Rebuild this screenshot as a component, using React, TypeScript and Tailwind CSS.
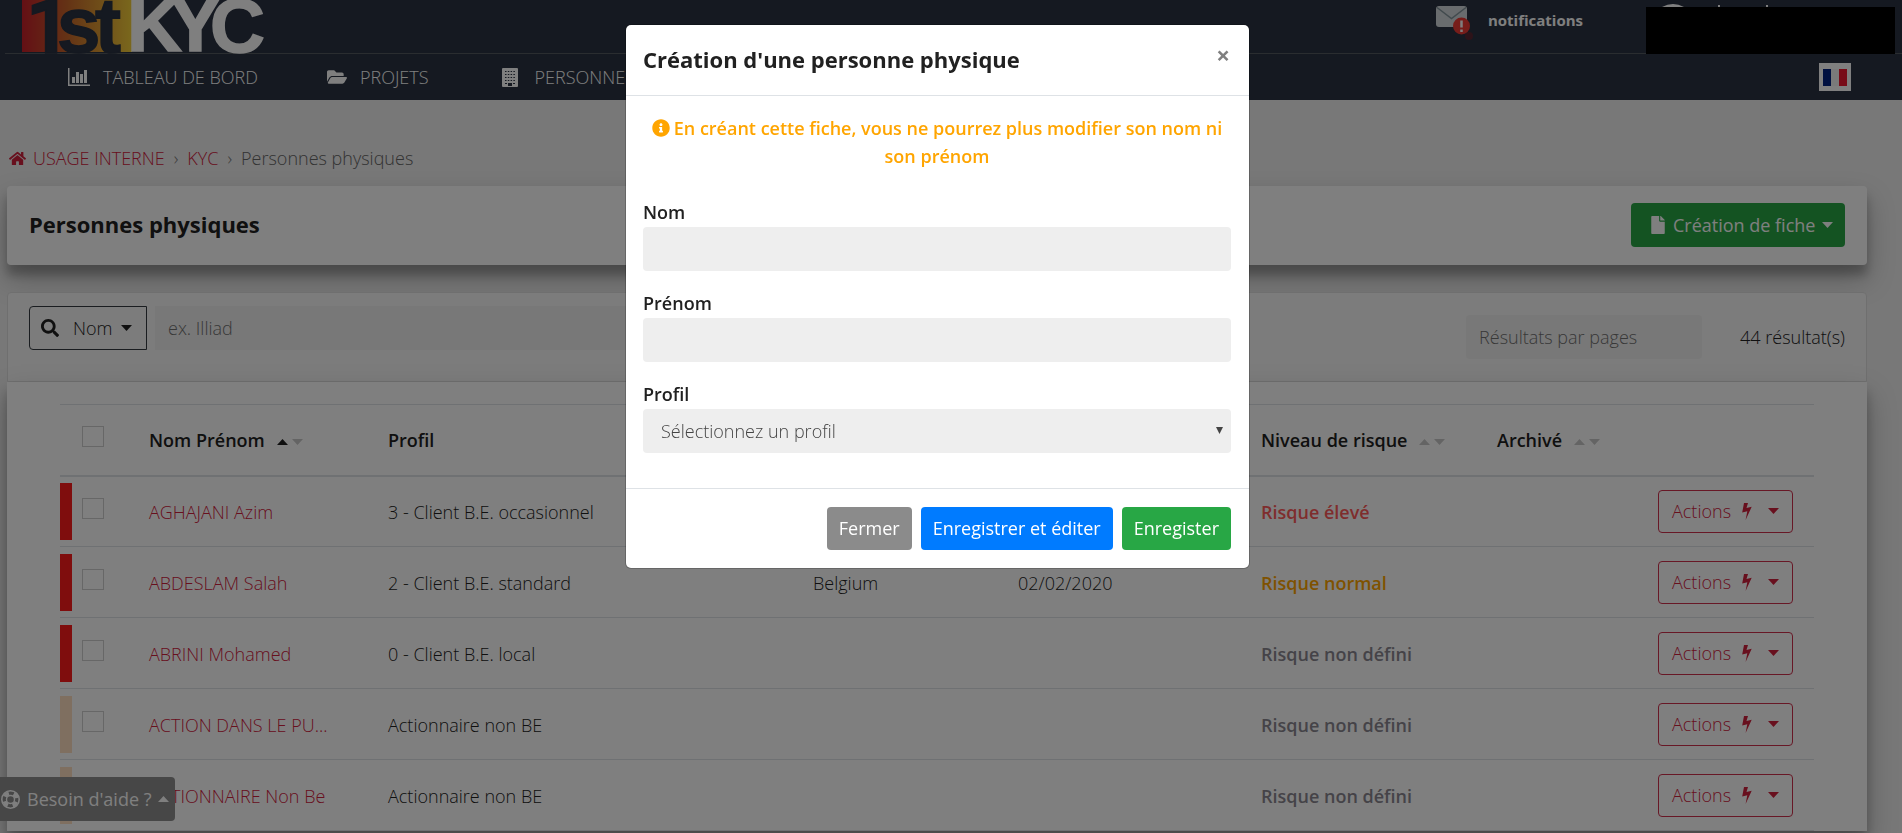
import React from 'react';
import { FaFile, FaFolderOpen, FaHome, FaInfoCircle, FaSearch } from 'react-icons/fa';

type Row = {
  name: string;
  profile: string;
  country?: string;
  date?: string;
  risk: string;
  riskClass: string;
  barClass: string;
};

const rows: Row[] = [
  { name: 'AGHAJANI Azim', profile: '3 - Client B.E. occasionnel', risk: 'Risque élevé', riskClass: 'text-[#ff5b5b]', barClass: 'bg-[#ff1a1a]' },
  { name: 'ABDESLAM Salah', profile: '2 - Client B.E. standard', country: 'Belgium', date: '02/02/2020', risk: 'Risque normal', riskClass: 'text-[#ffa500]', barClass: 'bg-[#ff1a1a]' },
  { name: 'ABRINI Mohamed', profile: '0 - Client B.E. local', risk: 'Risque non défini', riskClass: 'text-[#8a8790]', barClass: 'bg-[#ff1a1a]' },
  { name: 'ACTION DANS LE PU...', profile: 'Actionnaire non BE', risk: 'Risque non défini', riskClass: 'text-[#8a8790]', barClass: 'bg-[#ffdfc0]' },
  { name: 'ACTIONNAIRE Non Be', profile: 'Actionnaire non BE', risk: 'Risque non défini', riskClass: 'text-[#8a8790]', barClass: 'bg-[#ffdfc0]' },
];

const Caret: React.FC<{ up?: boolean; className?: string }> = ({ up, className }) => (
  <svg width="11" height="6" viewBox="0 0 11 6" className={className} fill="currentColor" aria-hidden="true">
    <path d={up ? 'M0 6 5.5 0 11 6z' : 'M0 0h11L5.5 6z'} />
  </svg>
);

const Sort: React.FC<{ active?: boolean }> = ({ active }) => (
  <span className="ml-3 inline-flex items-center gap-1 align-middle text-[#c8c8c8]">
    <Caret up className={active ? 'text-[#212121]' : ''} />
    <Caret />
  </span>
);

const Logo: React.FC = () => (
  <svg width="246" height="54" viewBox="0 0 246 54" className="block" fontFamily="'Liberation Sans', Arial, sans-serif" fontWeight="bold" role="img" aria-label="1st KYC">
    <defs>
      <linearGradient id="flame">
        <stop offset="0" stopColor="#c8202a" />
        <stop offset="0.4" stopColor="#c8642a" />
        <stop offset="1" stopColor="#f4d03a" />
      </linearGradient>
    </defs>
    <rect width="110" height="52" fill="url(#flame)" />
    <g fill="#2a3242" stroke="#2a3242" strokeWidth="1.5" fontSize="78">
      <text x="4" y="53" fontFamily="Roboto, sans-serif">1</text>
      <text x="35" y="52">s</text>
      <text x="73" y="52">t</text>
    </g>
    <g fill="#fff" stroke="#fff" strokeWidth="1.5" fontSize="76">
      <text x="105" y="51">K</text>
      <text x="148" y="51">Y</text>
      <text x="188" y="52">C</text>
    </g>
  </svg>
);

const ChartIcon = () => (
  <svg width="22" height="18" viewBox="0 0 22 18" fill="currentColor" aria-hidden="true">
    <path d="M0 0h1.500v16.500H22V18H0zM4 9h3v6H4zM8 4h3v11H8zM12 6h3v9h-3zM16 2h3v13h-3z" />
  </svg>
);

const BuildingIcon = () => (
  <svg width="16" height="19" viewBox="0 0 16 19" aria-hidden="true">
    <rect width="16" height="19" rx="1" fill="#fff" />
    <path d="M3 3.5h10M3 6.5h10M3 9.5h10M3 12.5h10" stroke="#2a3242" strokeDasharray="1.5 1.3" />
    <path d="M3 15.5h2M11 15.5h2" stroke="#2a3242" />
    <path d="M6 15h4v3H6z" fill="#2a3242" />
  </svg>
);

const MailIcon = () => (
  <svg width="40" height="36" viewBox="0 0 40 36" aria-hidden="true">
    <rect x="0" y="0" width="31" height="21" rx="3" fill="#d3d8dc" />
    <path d="M1 1.5 15.5 12.500 30 1.500" fill="none" stroke="#83959c" strokeWidth="1.500" />
    <circle cx="33" cy="30" r="4" fill="#5a2733" />
    <circle cx="25.500" cy="20" r="8.500" fill="#ee3b34" />
    <path d="M25.500 14.500v7M25.500 23.500v2.500" stroke="#fff" strokeWidth="2.500" />
  </svg>
);

const BoltIcon = () => (
  <svg width="10" height="17" viewBox="0 0 10 17" fill="currentColor" aria-hidden="true">
    <path d="M2 0h4L4.500 5 9.700 3.800 3.600 17l1.700-8.700L.2 9.500z" />
  </svg>
);

const LifeRingIcon = () => (
  <svg width="19" height="19" viewBox="0 0 19 19" fill="none" aria-hidden="true">
    <circle cx="9.500" cy="9.500" r="6.300" stroke="#8e8e8e" strokeWidth="4" />
    <circle cx="9.500" cy="9.500" r="6.300" stroke="#fff" strokeWidth="4" strokeDasharray="4.950 4.950" strokeDashoffset="-2.475" />
    <circle cx="9.500" cy="9.500" r="8.700" stroke="#fff" strokeWidth="1.600" />
    <circle cx="9.500" cy="9.500" r="4" stroke="#fff" strokeWidth="1.400" />
  </svg>
);

const Header: React.FC = () => (
  <header className="h-[100px] bg-[#2a3242] text-white">
    <div className="ml-[5px] flex h-[54px] items-start justify-between border-b border-[#555a60] pr-[7px]">
      <a href="#" className="ml-[17px]">
        <Logo />
      </a>
      <div className="flex items-start">
        <a href="#" className="mr-[63px] flex pt-[6px] text-[15px] leading-7 font-bold">
          <MailIcon />
          <span className="ml-3">notifications</span>
        </a>
        <div className="relative mt-[7px] h-[47px] w-[249px] bg-black">
          <svg width="130" height="3" viewBox="0 0 130 3" className="absolute -top-[3px] left-0" aria-hidden="true">
            <path d="M16 3Q27-3 38 3zM72 1h2v2h-2zM120 1h2v2h-2z" fill="#fff" />
          </svg>
        </div>
      </div>
    </div>
    <nav className="flex h-[46px] items-center justify-between pr-[51px] pl-[68px] text-[18px] font-light">
      <div className="flex items-center gap-[69px]">
        <a href="#" className="flex items-center gap-[13px]">
          <ChartIcon />
          TABLEAU DE BORD
        </a>
        <a href="#" className="flex items-center gap-[13px]">
          <FaFolderOpen size={20} />
          PROJETS
        </a>
        <a href="#" className="flex items-center gap-[17px] pl-1">
          <BuildingIcon />
          PERSONNES
        </a>
      </div>
      <button type="button" aria-label="Français" className="flex h-7 w-8 items-center justify-center bg-white">
        <svg width="24" height="17" viewBox="0 0 24 17" aria-hidden="true">
          <path d="M0 0h8v17H0z" fill="#002080" />
          <path d="M8 0h8v17H8z" fill="#f4f4f4" />
          <path d="M16 0h8v17h-8z" fill="#f01830" />
        </svg>
      </button>
    </nav>
  </header>
);

const PeopleTable: React.FC = () => (
  <table className="w-full table-fixed border-t border-[#dee2e6] text-left">
    <colgroup>
      <col className="w-[77px]" />
      <col className="w-[239px]" />
      <col />
      <col className="w-[205px]" />
      <col className="w-[243px]" />
      <col className="w-[236px]" />
      <col className="w-[161px]" />
      <col className="w-[168px]" />
    </colgroup>
    <thead>
      <tr className="h-[71px] border-b-2 border-[#dee2e6]">
        <th className="pl-[22px]">
          <input type="checkbox" aria-label="Tout sélectionner" className="mb-[6px] block h-[21px] w-[22px] appearance-none border border-[#cfcfcf]" />
        </th>
        <th className="px-3 pt-[2px] font-semibold">Nom Prénom<Sort active /></th>
        <th className="px-3 pt-[2px] font-semibold">Profil</th>
        <th className="px-3 pt-[2px] font-semibold">Pays</th>
        <th className="px-3 pt-[2px] font-semibold">Date</th>
        <th className="px-3 pt-[2px] font-semibold">Niveau de risque<Sort /></th>
        <th className="px-3 pt-[2px] font-semibold">Archivé<Sort /></th>
        <th aria-label="Actions" />
      </tr>
    </thead>
    <tbody>
      {rows.map((row) => (
        <tr key={row.name} className="h-[71px] border-b border-[#dee2e6]">
          <td>
            <div className="flex items-center gap-[10px]">
              <span className={`h-[57px] w-3 ${row.barClass}`} />
              <input type="checkbox" aria-label={row.name} className="mb-[6px] h-[21px] w-[22px] appearance-none border border-[#cfcfcf]" />
            </div>
          </td>
          <td className="px-3 pt-[2px] whitespace-nowrap"><a href="#" className="text-[#d0203c]">{row.name}</a></td>
          <td className="px-3 pt-[2px]">{row.profile}</td>
          <td className="px-3 pt-[2px]">{row.country}</td>
          <td className="px-3 pt-[2px]">{row.date}</td>
          <td className={`px-3 pt-[2px] font-semibold ${row.riskClass}`}>{row.risk}</td>
          <td />
          <td className="pl-3">
            <button type="button" className="flex h-[43px] w-[135px] items-center rounded border border-[#d0304c] pl-[13px] text-[#d0203c]">
              Actions
              <span className="ml-[11px]"><BoltIcon /></span>
              <Caret className="ml-4" />
            </button>
          </td>
        </tr>
      ))}
    </tbody>
  </table>
);

const Modal: React.FC = () => (
  <div className="fixed inset-0 flex items-start justify-center bg-black/50 pt-[25px] pr-[27px]">
    <form role="dialog" aria-labelledby="modal-title" className="w-[623px] rounded-[5px] bg-white shadow-[0_0_0_1px_rgba(0,0,0,0.2)]">
      <div className="flex h-[71px] items-start justify-between border-b border-[#dee2e6] pt-[18px] pr-[19px] pl-[17px]">
        <h5 id="modal-title" className="text-[22px] leading-[33px] font-bold">Création d'une personne physique</h5>
        <button type="button" aria-label="Fermer la fenêtre" className="text-[24px] leading-6 font-bold text-[#808080]">×</button>
      </div>
      <div className="pt-[18px] pr-[18px] pb-[35px] pl-[17px]">
        <p className="mb-[29px] text-center leading-7 font-semibold text-[#ffa500]">
          <FaInfoCircle size={18} className="mr-1 mb-1 inline" />
          En créant cette fiche, vous ne pourrez plus modifier son nom ni son prénom
        </p>
        <div className="mb-[19px]">
          <label htmlFor="nom" className="mb-[2px] block leading-[26px] font-semibold">Nom</label>
          <input id="nom" type="text" className="block h-11 w-full rounded bg-[#eee] px-[18px]" />
        </div>
        <div className="mb-[19px]">
          <label htmlFor="prenom" className="mb-[2px] block leading-[26px] font-semibold">Prénom</label>
          <input id="prenom" type="text" className="block h-11 w-full rounded bg-[#eee] px-[18px]" />
        </div>
        <div>
          <label htmlFor="profil" className="mb-[2px] block leading-[26px] font-semibold">Profil</label>
          <div className="relative">
            <select id="profil" className="block h-11 w-full appearance-none rounded bg-[#eee] px-[18px] font-light text-[#444]">
              <option>Sélectionnez un profil</option>
            </select>
            <svg width="7" height="7" viewBox="0 0 7 7" className="pointer-events-none absolute top-[18px] right-2" aria-hidden="true">
              <path d="M0 0h7L3.500 7z" fill="#444" />
            </svg>
          </div>
        </div>
      </div>
      <div className="flex justify-end gap-[9px] border-t border-[#dee2e6] pt-[18px] pr-[18px] pb-[18px] font-normal text-white">
        <button type="button" className="h-[43px] rounded bg-[#8b8b8b] px-3">Fermer</button>
        <button type="submit" className="h-[43px] rounded bg-[#007bff] px-3">Enregistrer et éditer</button>
        <button type="submit" className="h-[43px] rounded bg-[#28a745] px-3">Enregister</button>
      </div>
    </form>
  </div>
);

const App: React.FC = () => {
  return (
    <div className="h-screen overflow-hidden bg-[#f0f0f0] font-['Open_Sans',sans-serif] text-[18px] font-light text-[#212121]">
      <Header />
      <main className="pr-[35px] pl-[7px]">
        <nav aria-label="Fil d'Ariane" className="flex h-[86px] items-end pb-[14px] leading-7">
          <a href="#" className="flex items-center gap-[7px] pl-[2px] text-[#d0203c]">
            <FaHome size={17} />
            USAGE INTERNE
          </a>
          <span className="px-[9px] text-[#777]">›</span>
          <a href="#" className="text-[#d0203c]">KYC</a>
          <span className="px-[9px] text-[#777]">›</span>
          <span className="text-[#666]">Personnes physiques</span>
        </nav>

        <section className="flex h-[79px] items-start justify-between rounded bg-white pt-[17px] pr-[22px] pl-[22px] shadow-[0_14px_28px_rgba(0,0,0,0.25),0_10px_10px_rgba(0,0,0,0.22)]">
          <h1 className="text-[22px] leading-[42px] font-bold">Personnes physiques</h1>
          <button type="button" className="flex h-11 w-[214px] items-center rounded bg-[#28a745] pl-[18px] font-normal text-white">
            <FaFile size={18} className="mr-[6px]" />
            Création de fiche
            <Caret className="ml-[7px]" />
          </button>
        </section>

        <section className="mt-[27px] flex h-[90px] items-start justify-between rounded-t border border-[#dfdfdf] bg-[#f8f8f8] px-[21px]">
          <div className="flex flex-1 gap-2 pt-[13px]">
            <button type="button" className="flex h-11 w-[118px] items-center rounded-l border border-[#343a40] pl-[11px]">
              <FaSearch size={18} className="mr-[14px]" />
              Nom
              <Caret className="ml-[9px]" />
            </button>
            <input type="text" aria-label="Recherche" placeholder="ex. Illiad" className="h-11 w-1/3 bg-[#f0f0f0] px-[13px] placeholder:text-[#707070]" />
          </div>
          <div className="flex items-center gap-[38px] pt-[22px]">
            <input type="text" aria-label="Résultats par pages" placeholder="Résultats par pages" className="h-11 w-[236px] rounded bg-[#f0f0f0] px-[13px] placeholder:text-[#707070]" />
            <span>44 résultat(s)</span>
          </div>
        </section>
        <section className="bg-white px-[53px] pt-[22px] shadow-[0_14px_28px_rgba(0,0,0,0.25),0_10px_10px_rgba(0,0,0,0.22)]">
          <PeopleTable />
        </section>
      </main>
      <button type="button" className="fixed bottom-3 left-0 flex h-11 w-[175px] items-center gap-[7px] rounded-r bg-[#8e8e8e] pl-px font-normal text-white">
        <LifeRingIcon />
        Besoin d'aide ?
        <Caret up />
      </button>
      <Modal />
    </div>
  );
};

export default App;
